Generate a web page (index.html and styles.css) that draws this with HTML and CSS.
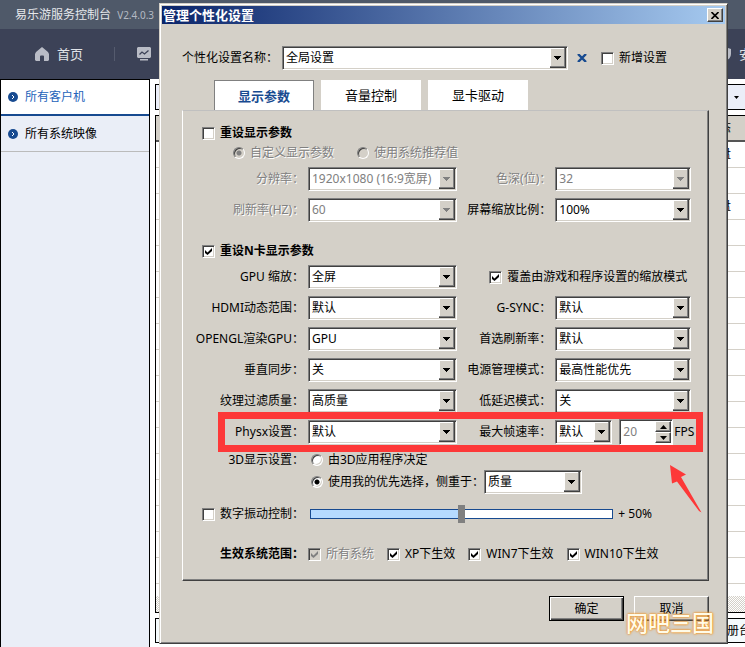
FILE: index.html
```
<!DOCTYPE html>
<html lang="zh-CN">

<head>
    <meta charset="utf-8" />
    <title>易乐游服务控制台</title>
    <link rel="stylesheet" href="styles.css">
</head>

<body>
    <header class="topbar">易乐游服务控制台 <small>V2.4.0.3</small></header>
    <nav class="nav">
        <a href="#home" class="home">
            <svg width="14" height="14" viewBox="0 0 14 14"><path fill="#b9bcc6" d="M7 0 13 5 14 7V13L13 14H9V9.500A1 1 0 0 0 8 8.500H6A1 1 0 0 0 5 9.500V14H1L0 13V7L1 5Z"/></svg>
            首页
        </a>
        <a href="#monitor" class="monitor" aria-label="监控">
            <svg width="14" height="14" viewBox="0 0 14 14"><path fill="#b9bcc6" d="M1 0H13L14 1V10L13 11H1L0 10V1ZM3 12H11V13.500H3Z"/><path fill="none" stroke="#3c4257" stroke-width="1.300" d="M2.500 7.500 5 5 7.500 7 11.500 3.500"/></svg>
        </a>
        <a href="#safe" class="safe">
            <svg width="12" height="14" viewBox="0 0 12 14"><path fill="#b9bcc6" d="M6 0 12 2V7Q12 12 6 14Q0 12 0 7V2Z"/></svg>
            安全
        </a>
    </nav>
    <div class="page">
        <aside class="sidebar">
            <a href="#clients" class="active"><svg width="10" height="10" viewBox="0 0 10 10"><circle cx="5" cy="5" r="5" fill="#174a90"/><path fill="none" stroke="#fff" d="M4 3 6 5 4 7"/></svg>所有客户机</a>
            <a href="#images"><svg width="10" height="10" viewBox="0 0 10 10"><circle cx="5" cy="5" r="5" fill="#174a90"/><path fill="none" stroke="#fff" d="M4 3 6 5 4 7"/></svg>所有系统映像</a>
        </aside>
        <main class="main">
            <div class="toolbar"><svg width="5" height="3" viewBox="0 0 5 3"><path d="M0 0H5L2.500 3Z"/></svg></div>
            <div class="list">
                <div class="rows">
                    <table>
                        <tr><th>状态</th></tr>
                        <tr><td>有盘</td></tr>
                        <tr><td></td></tr>
                        <tr><td>有盘</td></tr>
                        <tr><td></td></tr>
                        <tr><td></td></tr>
                        <tr><td></td></tr>
                        <tr><td></td></tr>
                        <tr><td></td></tr>
                        <tr><td></td></tr>
                        <tr><td></td></tr>
                        <tr><td></td></tr>
                        <tr><td></td></tr>
                        <tr><td></td></tr>
                        <tr><td></td></tr>
                        <tr><td></td></tr>
                        <tr><td></td></tr>
                        <tr><td></td></tr>
                    </table>
                </div>
                <div class="scrollbar"></div>
            </div>
            <footer class="status">注册台</footer>
        </main>
    </div>

    <form class="dialog" role="dialog" aria-labelledby="title">
        <div class="titlebar">
            <span id="title">管理个性化设置</span>
            <button type="button" class="close" aria-label="关闭"><svg width="8" height="7" viewBox="0 0 8 7"><path fill="none" stroke="#000" stroke-width="1.600" d="M.5 0 7.500 7M7.500 0 .5 7"/></svg></button>
        </div>
        <div class="profile">
            <label for="profile">个性化设置名称：</label>
            <select id="profile"><option>全局设置</option></select>
            <button type="button" class="delete" aria-label="删除"><svg width="10" height="8" viewBox="0 0 10 8"><path fill="none" stroke="#174a90" stroke-width="2.400" d="M1 0 9 8M9 0 1 8"/></svg></button>
            <label class="check"><input type="checkbox">新增设置</label>
        </div>
        <div class="tabs">
            <button type="button" class="current">显示参数</button>
            <button type="button">音量控制</button>
            <button type="button">显卡驱动</button>
        </div>
        <section class="panel">
            <label class="check heading"><input type="checkbox">重设显示参数</label>
            <div class="modes">
                <label class="check off"><input type="radio" name="mode" checked disabled>自定义显示参数</label>
                <label class="check off"><input type="radio" name="mode" disabled>使用系统推荐值</label>
            </div>
            <div class="fields">
                <label for="resolution" class="off">分辨率：</label>
                <select id="resolution" disabled><option>1920x1080 (16:9宽屏)</option></select>
                <label for="depth" class="off">色深(位)：</label>
                <select id="depth" disabled><option>32</option></select>
                <label for="refresh" class="off">刷新率(HZ)：</label>
                <select id="refresh" disabled><option>60</option></select>
                <label for="scale">屏幕缩放比例：</label>
                <select id="scale"><option>100%</option></select>
            </div>

            <label class="check heading nvidia"><input type="checkbox" checked>重设N卡显示参数</label>
            <div class="fields">
                <label for="gpuScale">GPU 缩放：</label>
                <select id="gpuScale"><option>全屏</option></select>
                <label class="check override"><input type="checkbox" checked>覆盖由游戏和程序设置的缩放模式</label>
                <label for="hdmi">HDMI动态范围：</label>
                <select id="hdmi"><option>默认</option></select>
                <label for="gsync">G-SYNC：</label>
                <select id="gsync"><option>默认</option></select>
                <label for="opengl">OPENGL渲染GPU：</label>
                <select id="opengl"><option>GPU</option></select>
                <label for="prefer">首选刷新率：</label>
                <select id="prefer"><option>默认</option></select>
                <label for="vsync">垂直同步：</label>
                <select id="vsync"><option>关</option></select>
                <label for="power">电源管理模式：</label>
                <select id="power"><option>最高性能优先</option></select>
                <label for="texture">纹理过滤质量：</label>
                <select id="texture"><option>高质量</option></select>
                <label for="latency">低延迟模式：</label>
                <select id="latency"><option>关</option></select>
                <label for="physx">Physx设置：</label>
                <select id="physx"><option>默认</option></select>
                <label for="maxFps">最大帧速率：</label>
                <div class="fps">
                    <select id="maxFps"><option>默认</option></select>
                    <div class="spinner">
                        <input type="text" id="fps" value="20" disabled>
                        <button type="button" aria-label="增加"><svg width="7" height="4" viewBox="0 0 7 4"><path d="M0 4H7L3.500 0Z"/></svg></button>
                        <button type="button" aria-label="减少"><svg width="7" height="4" viewBox="0 0 7 4"><path d="M0 0H7L3.500 4Z"/></svg></button>
                    </div>
                    <label for="fps">FPS</label>
                </div>
            </div>
            <div class="fields threed">
                <span>3D显示设置：</span>
                <label class="check wide"><input type="radio" name="threed">由3D应用程序决定</label>
                <div class="wide">
                    <label class="check"><input type="radio" name="threed" checked>使用我的优先选择，侧重于：</label>
                    <select id="quality" aria-label="侧重于"><option>质量</option></select>
                </div>
            </div>
            <div class="vibrance">
                <label class="check"><input type="checkbox">数字振动控制：</label>
                <input type="range" min="0" max="100" value="50" aria-label="数字振动控制">
                <span>+ 50%</span>
            </div>
            <div class="systems">
                <b>生效系统范围：</b>
                <label class="check off"><input type="checkbox" checked disabled>所有系统</label>
                <label class="check"><input type="checkbox" checked>XP下生效</label>
                <label class="check"><input type="checkbox" checked>WIN7下生效</label>
                <label class="check"><input type="checkbox" checked>WIN10下生效</label>
            </div>
        </section>
        <div class="actions">
            <button type="submit">确定</button>
            <button type="button">取消</button>
        </div>
        <div class="mark"></div>
        <svg class="arrow" width="32" height="48" viewBox="0 0 32 48"><path fill="#fd3838" d="M0 0 16 9.500 11 12 31.500 47.500 29 46 7 16.500 2 18.500Z"/></svg>
        <div class="watermark">网吧三国</div>
    </form>
</body>

</html>
```
FILE: styles.css
```
* {
    box-sizing: border-box;
}

body {
    position: relative;
    display: flex;
    flex-direction: column;
    min-height: 100vh;
    margin: 0;
    overflow: hidden;
    background: #fff;
    color: #000;
    font: 12px/20px "Noto Sans", "Noto Sans CJK SC", sans-serif;
}

a {
    color: inherit;
    text-decoration: none;
}

svg {
    flex: none;
    display: block;
}

input,
select,
button {
    margin: 0;
    font: inherit;
    color: inherit;
}

.topbar {
    height: 29px;
    padding: 0 15px;
    background: #4f5969;
    color: #e6e8ec;
    line-height: 29px;
}

.topbar small {
    margin-left: 3px;
    color: #b4b9c3;
    font-size: 10px;
}

.nav {
    display: flex;
    align-items: center;
    height: 50px;
    padding-left: 35px;
    background: #3c4257;
    color: #e0e2e8;
    font-size: 13px;
}

.nav a {
    display: flex;
    align-items: center;
    gap: 8px;
}

.nav .home {
    padding-right: 31px;
    border-right: 1px solid #555b6e;
    line-height: 13px;
}

.nav .monitor {
    margin-left: 22px;
}

.nav .safe {
    margin: 0 -20px 0 auto;
}

.page {
    flex: 1;
    display: flex;
}

.sidebar {
    width: 150px;
    border: 1px solid #000;
    border-bottom: none;
    background: #eaeef7;
}

.sidebar a {
    display: flex;
    align-items: center;
    gap: 7px;
    height: 36px;
    padding-left: 7px;
    border-bottom: 1px solid #bbb;
}

.sidebar .active {
    border-bottom: 2px solid #174a90;
    background: #fff;
    color: #2463ba;
}

.main {
    flex: 1;
    display: flex;
    flex-direction: column;
    gap: 5px;
    min-width: 0;
    padding: 5px 0 4px 5px;
}

.toolbar,
.list,
.status {
    border: 1px solid #000;
    border-right: none;
}

.toolbar {
    display: flex;
    align-items: center;
    justify-content: flex-end;
    height: 26px;
    padding-right: 6px;
    background: #ebeef8;
}

.list {
    flex: 1;
    display: flex;
    flex-direction: column;
    height: 0;
}

.rows {
    flex: 1;
    min-height: 0;
    overflow: hidden;
}

.list table {
    width: 100%;
    border-collapse: collapse;
    table-layout: fixed;
}

.list th,
.list td {
    height: 26px;
    padding: 0 14px;
    border-bottom: 1px solid #d4d0c8;
    font-weight: normal;
    text-align: right;
}

.list th {
    height: 25px;
    border-bottom: 2px solid #555;
    background: #d4d0c8;
}

.scrollbar {
    height: 16px;
    background: repeating-conic-gradient(#d4d0c8 0 25%, #fff 0 50%) 0 0 / 2px 2px;
}

.status {
    height: 25px;
    margin-right: -6px;
    background: #f5fafc;
    line-height: 23px;
    text-align: right;
}

/* dialog */
.dialog {
    position: absolute;
    top: 3px;
    right: 17px;
    left: 159px;
    padding: 1px 2px 22px 1px;
    border: 1px solid;
    border-color: #d4d0c8 #404040 #404040 #d4d0c8;
    background: #d4d0c8;
    box-shadow: inset 1px 1px 0 #fff, inset -1px -1px 0 #808080;
}

.titlebar {
    display: flex;
    align-items: center;
    justify-content: space-between;
    height: 18px;
    margin: 1px 0 0 1px;
    padding: 0 2px 0 1px;
    background: linear-gradient(90deg, #0a246a, #a6caf0);
    color: #fff;
    font-size: 13px;
    font-weight: bold;
    line-height: 18px;
}

.close,
.spinner button {
    display: flex;
    align-items: center;
    justify-content: center;
    padding: 0;
    border: 1px solid;
    border-color: #fff #404040 #404040 #fff;
    background: #d4d0c8;
    box-shadow: inset -1px -1px 0 #808080;
}

.close {
    width: 16px;
    height: 14px;
}

.profile {
    display: flex;
    align-items: center;
    height: 24px;
    margin: 22px 58px 0 21px;
}

.profile select {
    flex: 1;
    margin-left: 4px;
}

.delete {
    margin: 0 14px 0 9px;
    padding: 0;
    border: none;
    background: none;
}

select {
    height: 24px;
    padding: 0 18px 0 3px;
    border: 1px solid;
    border-color: #808080 #fff #fff #808080;
    border-radius: 0;
    outline: none;
    appearance: none;
    background: #fff url("data:image/svg+xml,%3Csvg xmlns='http://www.w3.org/2000/svg' width='16' height='20'%3E%3Cpath fill='%23404040' d='M0 0H16V20H0z'/%3E%3Cpath fill='%23808080' d='M0 0H15V19H0z'/%3E%3Cpath fill='%23fff' d='M0 0H14V18H0z'/%3E%3Cpath fill='%23d4d0c8' d='M1 1H14V18H1z'/%3E%3Cpath d='M4 8H11V9H10V10H9V11H8V12H7V11H6V10H5V9H4z'/%3E%3C/svg%3E") no-repeat right 1px center;
    box-shadow: inset 1px 1px 0 #404040, inset -1px -1px 0 #d4d0c8;
}

select:disabled {
    color: #808080;
    opacity: 1;
    background-image: url("data:image/svg+xml,%3Csvg xmlns='http://www.w3.org/2000/svg' width='16' height='20'%3E%3Cpath fill='%23404040' d='M0 0H16V20H0z'/%3E%3Cpath fill='%23808080' d='M0 0H15V19H0z'/%3E%3Cpath fill='%23fff' d='M0 0H14V18H0z'/%3E%3Cpath fill='%23d4d0c8' d='M1 1H14V18H1z'/%3E%3Cpath fill='%23808080' d='M4 8H11V9H10V10H9V11H8V12H7V11H6V10H5V9H4z'/%3E%3C/svg%3E");
}

.check {
    display: flex;
    align-items: center;
    gap: 5px;
    white-space: nowrap;
}

.off {
    color: #808080;
    text-shadow: 1px 1px 0 #fff;
}

input[type=checkbox],
input[type=radio] {
    flex: none;
    width: 13px;
    height: 13px;
    border: 1px solid;
    border-color: #808080 #fff #fff #808080;
    appearance: none;
    background: #fff no-repeat center;
    box-shadow: inset 1px 1px 0 #404040, inset -1px -1px 0 #d4d0c8;
}

input[type=radio] {
    width: 12px;
    height: 12px;
    border-radius: 50%;
}

input[type=checkbox]:checked {
    background-image: url("data:image/svg+xml,%3Csvg xmlns='http://www.w3.org/2000/svg' width='7' height='7'%3E%3Cpath d='M0 2 2.500 4.500 7 0V3L2.500 7 0 5z'/%3E%3C/svg%3E");
}

input[type=radio]:checked {
    background-image: radial-gradient(circle, #000 2px, transparent 3px);
}

input[type=checkbox]:disabled,
input[type=radio]:disabled {
    background-color: #d4d0c8;
}

input[type=checkbox]:disabled:checked {
    background-image: url("data:image/svg+xml,%3Csvg xmlns='http://www.w3.org/2000/svg' width='7' height='7'%3E%3Cpath fill='%23808080' d='M0 2 2.500 4.500 7 0V3L2.500 7 0 5z'/%3E%3C/svg%3E");
}

input[type=radio]:disabled:checked {
    background-image: radial-gradient(circle, #808080 2px, transparent 3px);
}

.tabs {
    display: flex;
    gap: 7px;
    margin: 10px 0 0 53px;
}

.tabs button {
    width: 100px;
    height: 30px;
    padding: 0;
    border: none;
    background: #fff;
    font-size: 13px;
}

.tabs .current {
    border: 1px solid #808080;
    border-bottom: none;
    color: #174a90;
    font-weight: bold;
}

.panel {
    margin: 0 16px 0 21px;
    padding: 12px 16px 16px 0;
    border: 1px solid;
    border-color: #c0c0c0 #404040 #404040 #fff;
    box-shadow: inset -1px -1px 0 #808080;
}

.heading {
    width: fit-content;
    margin-left: 19px;
    font-weight: bold;
}

.nvidia {
    margin: 19px 0 4px 19px;
}

.modes {
    display: flex;
    gap: 23px;
    margin: 0 0 4px 50px;
}

.fields {
    display: grid;
    grid-template-columns: 125px 11fr 98px 10fr;
    gap: 7px 0;
    align-items: center;
    margin-right: 1px;
}

.fields > label:not(.check),
.fields > span {
    padding-right: 4px;
    text-align: right;
    white-space: nowrap;
}

.fields .override {
    grid-column: 3 / 5;
    margin-left: 32px;
}

.fps {
    display: flex;
    align-items: center;
    margin-right: -6px;
}

.fps select {
    width: 57px;
}

.spinner {
    display: grid;
    grid-template: 1fr 1fr / 1fr 16px;
    width: 54px;
    height: 26px;
    margin: -1px 1px -1px 7px;
    padding: 1px;
    border: 1px solid;
    border-color: #808080 #fff #fff #808080;
    background: #fff;
    box-shadow: inset 1px 1px 0 #404040;
}

.spinner input {
    grid-row: 1 / 3;
    min-width: 0;
    padding: 0 2px;
    border: none;
    background: none;
    color: #808080;
}

.threed {
    row-gap: 0;
    margin-top: 6px;
}

.threed .wide {
    grid-column: 2 / 5;
    margin-left: 3px;
}

.threed div.wide {
    display: flex;
    align-items: center;
}

#quality {
    width: 98px;
}

.vibrance {
    display: flex;
    align-items: center;
    margin: 10px 40px 0 19px;
}

.vibrance input[type=range] {
    flex: 1;
    min-width: 0;
    height: 18px;
    margin: 0 5px 0 6px;
    appearance: none;
    background: none;
}

.vibrance input[type=range]::-webkit-slider-runnable-track {
    height: 10px;
    border: 1px solid #174a90;
    background: linear-gradient(90deg, #b5daff 50%, #fff 50%);
}

.vibrance input[type=range]::-webkit-slider-thumb {
    width: 7px;
    height: 18px;
    margin-top: -5px;
    appearance: none;
    background: #808080;
}

.systems {
    display: flex;
    gap: 13px;
    margin: 20px 0 0 37px;
}

.systems b {
    margin-right: -9px;
}

.actions {
    display: flex;
    justify-content: flex-end;
    gap: 10px;
    margin: 15px 16px 0 0;
}

.actions button {
    width: 75px;
    height: 25px;
    padding: 0;
    border: 1px solid;
    border-color: #fff #404040 #404040 #fff;
    background: #d4d0c8;
    box-shadow: inset -1px -1px 0 #808080;
}

.actions button[type=submit] {
    border-color: #000;
    box-shadow: inset 1px 1px 0 #fff, inset -1px -1px 0 #404040, inset -2px -2px 0 #808080;
}

/* annotations over the dialog */
.mark {
    position: absolute;
    top: 408px;
    right: 24px;
    left: 58px;
    height: 40px;
    border: 7px solid #fd3838;
    pointer-events: none;
}

.arrow {
    position: absolute;
    top: 461px;
    right: 25px;
}

.watermark {
    position: absolute;
    right: 13px;
    bottom: 9px;
    color: #fffbe8;
    font-size: 22px;
    font-weight: 500;
    line-height: 24px;
    text-shadow: 0 0 1px #f0962c, 0 0 2px #f0962c, 0 0 3px #f0962c;
}
```
